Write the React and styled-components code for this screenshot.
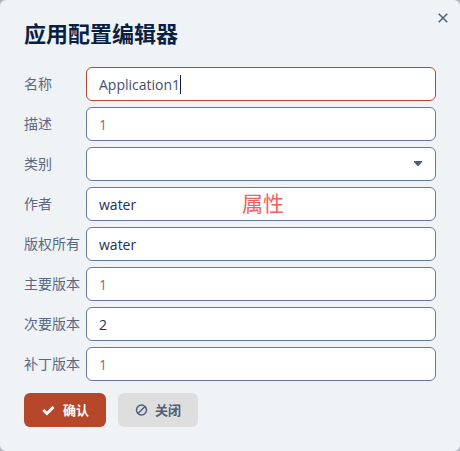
import React, { useState } from "react";
import styled, { createGlobalStyle } from "styled-components";

const GlobalStyle = createGlobalStyle`
  *, *::before, *::after { box-sizing: border-box; }
  body {
    margin: 0;
    background: #b4b6c0;
    font-family: "Open Sans", "Noto Sans CJK SC", sans-serif;
    font-size: 14px;
    line-height: 20px;
    color: #0a1f44;
  }
  button, input, select { font: inherit; }
`;

const Dialog = styled.section`
  position: relative;
  min-height: 100vh;
  padding: 16px 24px 24px;
  border-radius: 6px;
  background: #f0f3f6;
`;

const Title = styled.h1`
  margin: 0 0 16px;
  font-size: 22px;
  line-height: 35px;
  font-weight: 700;
  color: #0a1f44;
`;

const CloseButton = styled.button`
  position: absolute;
  top: 8px;
  right: 7px;
  display: grid;
  place-items: center;
  width: 20px;
  height: 20px;
  padding: 0;
  border: 0;
  background: none;
  color: #4e5d78;
  cursor: pointer;
`;

const Fields = styled.div`
  display: grid;
  gap: 6px;
`;

const Row = styled.div`
  display: grid;
  grid-template-columns: 62px 1fr;
  align-items: center;
`;

const Label = styled.label`
  color: #5b6882;
  white-space: nowrap;
`;

const Control = styled.div`
  position: relative;
  display: grid;
`;

const TextInput = styled.input`
  width: 100%;
  height: 34px;
  padding: 0 12px;
  border: 1px solid ${({ $active }) => ($active ? "#b7472a" : "#6576a0")};
  border-radius: 6px;
  outline: 0;
  background: #fff;
  color: ${({ $active }) => ($active ? "#3f4f6e" : "#1d3050")};
  caret-color: transparent;
  &::placeholder { color: #6d7588; opacity: 1; }
`;

const Select = styled.select`
  width: 100%;
  height: 34px;
  padding: 0 32px 0 12px;
  border: 1px solid #6576a0;
  border-radius: 6px;
  outline: 0;
  appearance: none;
  background: #fff;
  color: #0a1f44;
`;

const Arrow = styled.svg`
  position: absolute;
  top: 14px;
  right: 14px;
  pointer-events: none;
`;

const Caret = styled.span`
  position: absolute;
  top: 8px;
  left: 94px;
  width: 1px;
  height: 19px;
  background: #0a1f44;
`;

const Note = styled.span`
  position: absolute;
  top: 0;
  left: 156px;
  font-size: 21px;
  line-height: 32px;
  color: #f5605a;
  pointer-events: none;
`;

const Actions = styled.div`
  display: flex;
  gap: 12px;
  margin-top: 12px;
`;

const Button = styled.button`
  display: flex;
  align-items: center;
  gap: 7px;
  height: 34px;
  padding: 0 17px;
  border: 0;
  border-radius: 6px;
  font-size: 13px;
  font-weight: 700;
  background: ${({ $primary }) => ($primary ? "#b7472a" : "#dedede")};
  color: ${({ $primary }) => ($primary ? "#fff" : "#4e5d78")};
  cursor: pointer;
`;

const CheckIcon = () => (
  <svg width="15" height="14" viewBox="0 0 15 14" aria-hidden="true">
    <path d="M2.3 7 5.9 10.5 12.5 4" fill="none" stroke="currentColor" strokeWidth="2.9" />
  </svg>
);

const BanIcon = () => (
  <svg width="13" height="14" viewBox="0 0 13 14" aria-hidden="true">
    <g fill="none" stroke="currentColor" strokeWidth="1.5">
      <circle cx="6.5" cy="7" r="5" />
      <path d="M3 10.5 10 3.5" />
    </g>
  </svg>
);

const fields = [
  { id: "name", label: "名称", value: "Application1", active: true },
  { id: "description", label: "描述", placeholder: "1" },
  { id: "category", label: "类别", select: true },
  { id: "author", label: "作者", value: "water", note: "属性" },
  { id: "copyright", label: "版权所有", value: "water" },
  { id: "major", label: "主要版本", placeholder: "1" },
  { id: "minor", label: "次要版本", value: "2" },
  { id: "patch", label: "补丁版本", placeholder: "1" },
];

function Field({ id, label, value = "", placeholder, active, select, note }) {
  const [text, setText] = useState(value);
  return (
    <Row>
      <Label htmlFor={id}>{label}</Label>
      <Control>
        {select ? (
          <>
            <Select id={id} defaultValue="">
              <option value="" />
            </Select>
            <Arrow width="8" height="5" viewBox="0 0 8 5" aria-hidden="true">
              <path d="M0 0h8v1L4.5 5h-1L0 1z" fill="#4e5d78" />
            </Arrow>
          </>
        ) : (
          <TextInput
            id={id}
            type="text"
            value={text}
            placeholder={placeholder}
            $active={active}
            onChange={(e) => setText(e.target.value)}
          />
        )}
        {active && <Caret />}
        {note && <Note>{note}</Note>}
      </Control>
    </Row>
  );
}

export default function App() {
  return (
    <>
      <GlobalStyle />
      <Dialog role="dialog" aria-labelledby="dialog-title">
        <Title id="dialog-title">应用配置编辑器</Title>
        <CloseButton type="button" aria-label="关闭">
          <svg width="10" height="10" viewBox="0 0 10 10" aria-hidden="true">
            <path d="M.7.7 9.3 9.3M9.3.7.7 9.3" fill="none" stroke="currentColor" strokeWidth="1.5" />
          </svg>
        </CloseButton>
        <Fields>
          {fields.map((field) => (
            <Field key={field.id} {...field} />
          ))}
        </Fields>
        <Actions>
          <Button type="button" $primary>
            <CheckIcon />
            确认
          </Button>
          <Button type="button">
            <BanIcon />
            关闭
          </Button>
        </Actions>
      </Dialog>
    </>
  );
}
